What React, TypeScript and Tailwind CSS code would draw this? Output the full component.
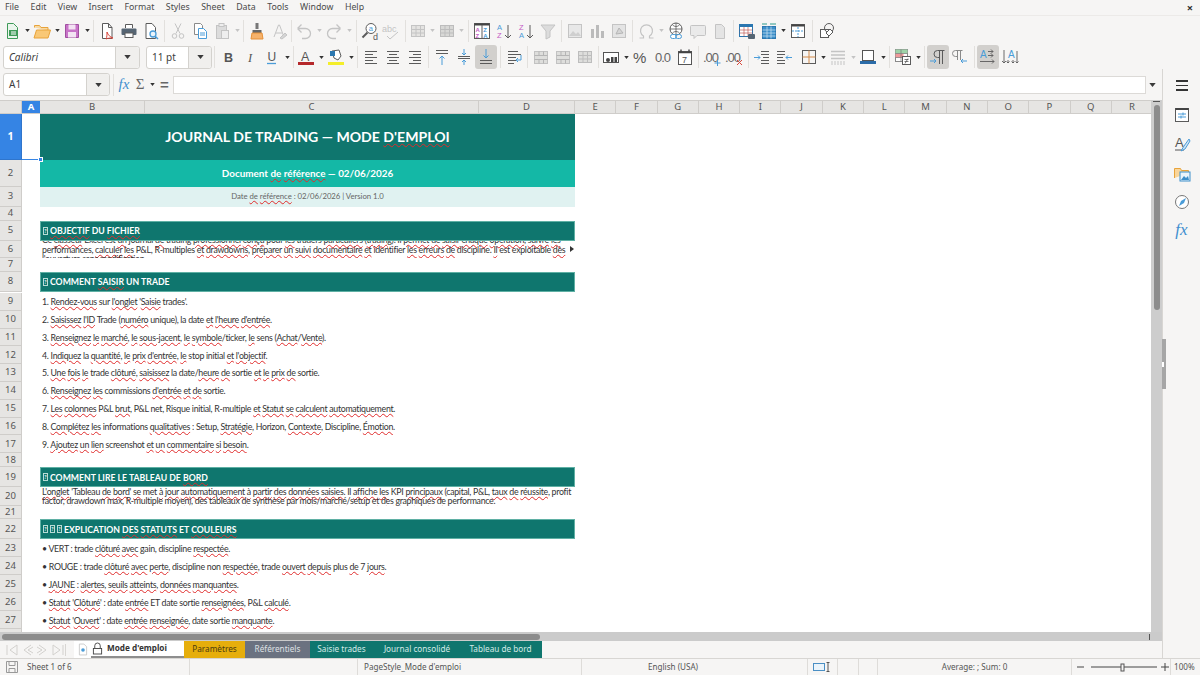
import type { ReactNode } from 'react';

const UI = "font-['Noto_Sans','Open_Sans',sans-serif]";
const CELL = "font-['Lato','Noto_Sans',sans-serif]";
const G = '#5b5b5b';
const D = '#c4c4c4';
const BL = '#4a9cd8';

function Ic({ children }: { children: ReactNode }) {
  return (
    <svg viewBox="0 0 22 22" className="h-[22px] w-[22px] shrink-0" fill="none" strokeWidth="1">
      {children}
    </svg>
  );
}

function Btn({ children, active }: { children?: ReactNode; active?: boolean }) {
  return (
    <div className={active ? 'h-[24px] w-[22px] shrink-0 flex items-center justify-center rounded-[3px] bg-[#d2d0cd]' : 'h-[24px] w-[22px] shrink-0 flex items-center justify-center'}>
      <Ic>{children}</Ic>
    </div>
  );
}

function Arr({ off, narrow }: { off?: boolean; narrow?: boolean }) {
  return (
    <div className={narrow ? 'w-[7px] shrink-0 flex justify-center' : 'w-[8px] shrink-0 flex justify-center'}>
      <svg viewBox="0 0 6 4" className="h-[3px] w-[5px] shrink-0">
        <path d="M0 0h6L3 4z" fill={off ? '#c4c4c4' : '#333'} />
      </svg>
    </div>
  );
}

function Sep({ w }: { w: string }) {
  return (
    <div className={`${w} shrink-0 flex justify-center`}>
      <div className="h-[22px] w-px bg-[#e2e0dd]" />
    </div>
  );
}

const Lines = ({ ys, x1 = 5, x2 = 17, c = G, short = false, right = false }: { ys: number[]; x1?: number; x2?: number; c?: string; short?: boolean; right?: boolean }) => (
  <>
    {ys.map((y, i) => (
      <path key={y} d={`M${right && short && i % 2 ? x1 + 4 : x1} ${y + 0.5}H${!right && short && i % 2 ? x2 - 4 : x2}`} stroke={c} />
    ))}
  </>
);

const TableIc = ({ c = D, fill = '#e4e3e1' }: { c?: string; fill?: string }) => (
  <>
    <rect x="4.5" y="5.5" width="13" height="11" fill={fill} stroke={c} />
    <path d="M4.5 9.5h13M4.5 13h13M9 5.5v11M13.5 5.5v11" stroke={c} />
  </>
);

const MergeIc = () => (
  <>
    <rect x="4.5" y="5.5" width="13" height="12" fill="#dededc" stroke="#c2c2c2" />
    <path d="M4.5 9.5h13M4.5 13.5h13M9 5.5v4M13.5 5.5v4M9 13.5v4M13.5 13.5v4" stroke="#b5b5b5" />
  </>
);

function Toolbar1() {
  return (
    <div className="flex h-[29px] items-center pl-[1px]">
      <Btn><path d="M6.5 3.5h6l4 4v11h-10z" fill="#eaf5ec" stroke="#3f9a58" /><rect x="8" y="10" width="9" height="6" fill="#3f9a58" /><path d="M10 12h5M10 14h5" stroke="#fff" /></Btn>
      <Arr />
      <Btn><path d="M3.5 7.5v-2h5l1.5 2h7v3" fill="#f7d9a2" stroke="#e8a33a" /><path d="M3 18h14l2.5-8H5.5z" fill="#f9c876" stroke="#e8a33a" /></Btn>
      <Arr />
      <Btn><path d="M4.5 4.5h13v13h-13z" fill="#c873c8" stroke="#a04fa0" /><rect x="7.5" y="4.5" width="7" height="5" fill="#f3e3f3" /><rect x="7" y="12" width="8" height="5.5" fill="#f3e3f3" /></Btn>
      <Arr />
      <Sep w="w-[5px]" />
      <Btn><path d="M6.5 3.5h6l3.5 4v11h-9.5z" fill="#fff" stroke={G} /><path d="M12.5 3.5v4h3.5" stroke={G} /><path d="M11 12c1 3 3 5 6 6-3 0-5 0-7 1 1-2 1-4 1-7z" stroke="#d8453a" fill="none" /></Btn>
      <Btn><path d="M7.5 8V4.5h7V8" stroke={G} fill="#fff" /><rect x="3.5" y="8.5" width="15" height="6.5" rx="1" fill="#566573" /><rect x="7" y="13" width="8" height="4.5" fill="#fff" stroke={G} /></Btn>
      <Btn><path d="M6 3.5h6l3.5 4v11H6z" fill="#fff" stroke={G} /><circle cx="13" cy="14" r="3" fill="#eaf4fb" stroke={BL} strokeWidth="1.3" /><path d="M15 16l3 3" stroke={BL} strokeWidth="1.5" /></Btn>
      <Sep w="w-[5px]" />
      <Btn><path d="M8 3.5l5 10M14 3.5l-5 10" stroke={D} /><circle cx="7.5" cy="16" r="2.3" stroke={D} /><circle cx="14.5" cy="16" r="2.3" stroke={D} /></Btn>
      <Btn><path d="M5.5 3.5h6l2 2v9h-8z" fill="#fff" stroke="#8a8a8a" /><path d="M9.5 8.5h5l3 3v7h-8z" fill="#fff" stroke={BL} /><path d="M11 13h5M11 15h5" stroke={BL} /></Btn>
      <Btn><rect x="5.5" y="5.5" width="10" height="13" fill="#dcdcdc" stroke={D} /><rect x="8" y="3.5" width="5" height="3" fill="#eee" stroke={D} /><rect x="10.5" y="10.5" width="7" height="8" fill="#eee" stroke={D} /></Btn>
      <Arr off />
      <Sep w="w-[5px]" />
      <Btn><rect x="9.5" y="3" width="3" height="6" fill="#777" /><path d="M6.5 10h9v3h-9z" fill="#666" /><path d="M6 13h10l1 6H5z" fill="#f6b26b" stroke="#e69138" /></Btn>
      <Btn><path d="M6 17L10.5 5h1L16 17M8 13h6" stroke={D} /><path d="M12 18l5-5 2 2-5 4z" fill="#d5d5d5" stroke={D} /></Btn>
      <div className="w-[3px] shrink-0 flex justify-center"><div className="h-[22px] w-px bg-[#e2e0dd]" /></div>
      <Btn><path d="M4.5 8.5h8a5 5 0 010 10H9M4.5 8.5l4-4M4.5 8.5l4 4" stroke={D} strokeWidth="1.3" /></Btn>
      <Arr off />
      <Btn><path d="M17.5 8.5h-8a5 5 0 000 10H13M17.5 8.5l-4-4M17.5 8.5l-4 4" stroke={D} strokeWidth="1.3" /></Btn>
      <Arr off />
      <Sep w="w-[6px]" />
      <Btn><circle cx="12" cy="8.5" r="5" fill="#fff" stroke={G} /><path d="M8.5 12.5l-5 5" stroke={G} strokeWidth="2" /><text x="9.7" y="11" fontSize="7.5" fill={BL} fontFamily="Liberation Sans">a</text><text x="14" y="20" fontSize="9" fill={G} fontFamily="Liberation Sans">d</text></Btn>
      <Btn><text x="1" y="12" fontSize="9" fill={D} fontFamily="Liberation Sans">abc</text><path d="M6 16l3 3 8-7" stroke={D} /></Btn>
      <div className="w-[4px] shrink-0 flex justify-center"><div className="h-[22px] w-px bg-[#e2e0dd]" /></div>
      <Btn><TableIc /></Btn>
      <Arr off narrow />
      <Btn><TableIc c="#bdbdbd" fill="#d8d8d6" /></Btn>
      <Arr off narrow />
      <Sep w="w-[6px]" />
      <Btn><rect x="3.5" y="3.5" width="15" height="15" fill="#fff" stroke={G} /><path d="M3.5 4.5h15" stroke="#444" strokeWidth="2" /><path d="M11 5v13" stroke={G} /><text x="4.5" y="11.5" fontSize="6" fill="#c45ac4" fontFamily="Liberation Sans" fontWeight="700">A</text><text x="4.5" y="17.5" fontSize="6" fill="#c45ac4" fontFamily="Liberation Sans" fontWeight="700">Z</text><text x="12.3" y="11.5" fontSize="6" fill={BL} fontFamily="Liberation Sans" fontWeight="700">Z</text><text x="12.3" y="17.5" fontSize="6" fill={BL} fontFamily="Liberation Sans" fontWeight="700">A</text></Btn>
      <Btn><text x="4" y="10" fontSize="7.5" fill={BL} fontFamily="Liberation Sans">A</text><text x="4" y="18" fontSize="7.5" fill="#c45ac4" fontFamily="Liberation Sans">Z</text><path d="M15 5v13M12 15l3 3 3-3" stroke={G} /></Btn>
      <Btn><text x="4" y="10" fontSize="7.5" fill="#c45ac4" fontFamily="Liberation Sans">Z</text><text x="4" y="18" fontSize="7.5" fill={BL} fontFamily="Liberation Sans">A</text><path d="M15 5v13M12 15l3 3 3-3" stroke={G} /></Btn>
      <Btn><path d="M4 5h14l-5 6v6l-4 2v-8z" fill="#dcdcdc" stroke={D} /></Btn>
      <Sep w="w-[5px]" />
      <Btn><rect x="4.5" y="4.5" width="13" height="13" fill="#e8e8e8" stroke={D} /><path d="M5 16l4-5 3 3 2-2 3 4z" fill="#cfcfcf" /></Btn>
      <Btn><rect x="5" y="9" width="3" height="9" fill="#bbb" /><rect x="10" y="5" width="3" height="13" fill="#bbb" /><rect x="15" y="11" width="3" height="7" fill="#bbb" /></Btn>
      <Btn><rect x="4.5" y="4.5" width="13" height="13" fill="#e4e4e4" stroke={D} /><path d="M8 14l3-6 4 5z" stroke="#b5b5b5" fill="#d5d5d5" /></Btn>
      <Sep w="w-[5px]" />
      <Btn><path d="M4.5 18h4v-2a6 6 0 116 0v2h4" stroke={D} strokeWidth="1.2" /></Btn>
      <Arr off />
      <Btn><circle cx="11" cy="9" r="6" fill="#fff" stroke={G} /><path d="M5 9h12M11 3v12M7.5 5c2 2 5 2 7 0M7.5 13c2-2 5-2 7 0" stroke={G} strokeWidth="0.8" /><rect x="5.5" y="14.5" width="6" height="4" rx="2" fill="#fff" stroke={BL} /><rect x="10.5" y="14.5" width="6" height="4" rx="2" stroke={BL} /></Btn>
      <Btn><path d="M4.5 5.5h13a1 1 0 011 1v8a1 1 0 01-1 1H10l-3 3v-3H4.5a1 1 0 01-1-1v-8a1 1 0 011-1z" fill="#eaeaea" stroke={D} /></Btn>
      <Btn><path d="M6.5 4.5h6l3 3v11h-9z" fill="#e4e4e4" stroke={D} /></Btn>
      <Sep w="w-[5px]" />
      <Btn><rect x="3.5" y="4.5" width="13" height="12" fill="#fff" stroke="#2b77b0" /><path d="M3.5 10h13M3.5 13h13M8 7v9.5M12 7v9.5" stroke="#b8473f" strokeWidth="0.6" /><rect x="3.5" y="4.5" width="13" height="2.5" fill="#2b77b0" /><rect x="12" y="14" width="7" height="5" rx="1" fill="#566573" /></Btn>
      <Btn><rect x="4.5" y="6.5" width="13" height="12" fill="#3d8fc9" stroke="#2b77b0" /><path d="M4.5 10h13M4.5 13h13M4.5 16h13M9 6.5v12M13 6.5v12" stroke="#cde4f4" strokeWidth="0.7" /><path d="M4 4h5M12 4h6" stroke="#2e9c8e" /></Btn>
      <Arr narrow />
      <Btn><rect x="4.5" y="4.5" width="13" height="13" fill="#fff" stroke={G} /><path d="M4.5 5.5h13" stroke="#444" strokeWidth="2" /><path d="M5 11h12M11 7v10" stroke={BL} strokeDasharray="2 1" /></Btn>
      <Sep w="w-[7px]" />
      <Btn><rect x="4.5" y="9.5" width="8" height="8" fill="#fff" stroke={G} /><circle cx="13" cy="8" r="4.5" stroke={G} /><path d="M10 13l4-4 3 3-4 4z" fill="#fff" stroke={G} /></Btn>
    </div>
  );
}

function Box({ w, text, italic, arrowW }: { w: string; text: string; italic?: boolean; arrowW: string }) {
  return (
    <div className={`${w} flex h-[23px] shrink-0 rounded-[3px] border border-[#d4d2ce] bg-white`}>
      <div className={`flex-1 truncate pl-[5px] text-[10px] leading-[21px] text-[#3d3d3d] ${italic ? 'italic' : ''}`}>{text}</div>
      <div className={`${arrowW} flex items-center justify-center rounded-r-[3px] border-l border-[#d4d2ce] bg-[#f0efed]`}>
        <svg viewBox="0 0 8 5" className="h-[4px] w-[7px]"><path d="M0 0h8L4 5z" fill="#3a3a3a" /></svg>
      </div>
    </div>
  );
}

function Toolbar2() {
  return (
    <div className="flex h-[24px] items-center pl-[3px]">
      <Box w="w-[137px]" text="Calibri" italic arrowW="w-[24px]" />
      <div className="w-[6px] shrink-0" />
      <Box w="w-[66px]" text="11 pt" arrowW="w-[23px]" />
      <Sep w="w-[5px]" />
      <Btn><text x="7" y="16" fontSize="12.5" fontWeight="700" fill="#555" fontFamily="Liberation Sans">B</text></Btn>
      <div className="w-px shrink-0" />
      <Btn><text x="8" y="16" fontSize="12.5" fontStyle="italic" fill="#555" fontFamily="Liberation Serif">I</text></Btn>
      <div className="-ml-px" />
      <Btn><text x="6.5" y="15" fontSize="12" fill="#555" fontFamily="Liberation Sans">U</text><path d="M6 17.5h9" stroke={BL} strokeWidth="1.3" /></Btn>
      <Arr />
      <div className="w-[4px] shrink-0 flex justify-center"><div className="h-[22px] w-px bg-[#e2e0dd]" /></div>
      <Btn><text x="6" y="14.5" fontSize="12.5" fill="#555" fontFamily="Liberation Sans">A</text><rect x="3" y="16" width="16" height="3" fill="#b5282b" /></Btn>
      <Arr />
      <Btn><path d="M7 5l7-1 2 6-3 4-4-2z" fill="#fff" stroke={G} /><rect x="5" y="5" width="5" height="5" fill="#2b77b0" /><rect x="3" y="16" width="16" height="3" fill="#f4ee2a" /></Btn>
      <Arr />
      <Sep w="w-[5px]" />
      <Btn><Lines ys={[5, 8, 11, 14, 17]} short /></Btn>
      <Btn><path d="M5 5.5h12M7 8.5h8M5 11.5h12M7 14.5h8M5 17.5h12" stroke={G} /></Btn>
      <Btn><Lines ys={[5, 8, 11, 14, 17]} short right /></Btn>
      <Sep w="w-[5px]" />
      <Btn><path d="M5 4.5h12M5 7.5h12" stroke={G} /><path d="M11 19v-9M8.5 12.5L11 10l2.5 2.5" stroke={BL} /></Btn>
      <Btn><path d="M5 10.5h12M5 12.5h12" stroke={G} /><path d="M11 3v6M9 7l2 2 2-2M11 19v-5M9 16l2-2 2 2" stroke={BL} /></Btn>
      <Btn active><path d="M5 14.5h12M5 17.5h12" stroke={G} /><path d="M11 3v9M8.5 9.5L11 12l2.5-2.5" stroke={BL} /></Btn>
      <Sep w="w-[6px]" />
      <Btn><path d="M5 5.5h10M5 8.5h13M5 11.5h8M5 14.5h8M5 17.5h6" stroke={G} /><path d="M18 9v5h-5M15 12l-2 2 2 2" stroke={BL} /></Btn>
      <Sep w="w-[5px]" />
      <Btn><MergeIc /></Btn>
      <Btn><MergeIc /></Btn>
      <Btn><TableIc c="#bdbdbd" fill="#dededc" /></Btn>
      <div className="w-[4px] shrink-0 flex justify-center"><div className="h-[22px] w-px bg-[#e2e0dd]" /></div>
      <Btn><rect x="3.5" y="6.5" width="15" height="10" fill="#fff" stroke="#555" /><circle cx="8" cy="14" r="2" fill="#444" /><rect x="11" y="11" width="2.5" height="5" fill="#444" /><rect x="14.5" y="11" width="2.5" height="5" fill="#444" /></Btn>
      <Arr />
      <Btn><text x="3" y="16.5" fontSize="15" fill="#555" fontFamily="Liberation Sans" textLength="16">%</text></Btn>
      <Btn><text x="3" y="16" fontSize="13" fill="#666" fontFamily="Liberation Sans" textLength="16">0.0</text></Btn>
      <Btn><rect x="4.5" y="5.5" width="13" height="13" fill="#fff" stroke="#555" /><path d="M4.5 6.5h13M7 3.5v3M15 3.5v3" stroke="#444" strokeWidth="1.4" /><text x="8" y="16.5" fontSize="9" fill="#555" fontFamily="Liberation Sans">7</text></Btn>
      <Sep w="w-[5px]" />
      <Btn><text x="2" y="15.5" fontSize="13" fill="#666" fontFamily="Liberation Sans" textLength="16">.00</text><path d="M16.5 14v6M13.5 17h6" stroke={BL} /></Btn>
      <Btn><text x="2" y="15.5" fontSize="13" fill="#666" fontFamily="Liberation Sans" textLength="16">.00</text><path d="M14 14l5 5M19 14l-5 5" stroke="#d8453a" /></Btn>
      <Sep w="w-[6px]" />
      <Btn><path d="M10 5.5h8M10 8.5h8M12 11.5h6M10 14.5h8M10 17.5h8" stroke={G} /><path d="M3 11.5h6M7 9.5l2 2-2 2" stroke={BL} /></Btn>
      <Btn><path d="M4 5.5h8M4 8.5h8M4 11.5h6M4 14.5h8M4 17.5h8" stroke={G} /><path d="M19 11.5h-6M15 9.5l-2 2 2 2" stroke={BL} /></Btn>
      <div className="w-[3px] shrink-0" />
      <Btn><rect x="4.5" y="4.5" width="13" height="13" stroke={G} /><path d="M11 4.5v13M4.5 11h13" stroke="#d38b4a" /></Btn>
      <Arr narrow />
      <Btn><path d="M4 5.5h14M4 9h14M4 12.5h14" stroke={D} strokeWidth="1.4" /><path d="M4 16h14M4 18h14" stroke={D} strokeDasharray="2 1" /></Btn>
      <Arr off />
      <Btn><rect x="5.5" y="4.5" width="11" height="10" fill="#fff" stroke="#555" /><rect x="3" y="15" width="16" height="3" fill="#2b6ca8" /></Btn>
      <Arr />
      <Sep w="w-[5px]" />
      <Btn><rect x="3.5" y="3.5" width="12" height="12" fill="#fff" stroke="#8a8a8a" /><path d="M3.5 3.5h12v4h-12z" fill="#9ed3a8" /><path d="M3.5 7.5h8v4h-8z" fill="#ef9a9a" /><path d="M3.5 7.5h12M3.5 11.5h12M9 3.5v12" stroke="#777" strokeWidth="0.7" /><rect x="10.5" y="10.5" width="8" height="8" fill="#fff" stroke={G} /><path d="M12.5 13.5h4M12.5 15.5h4M16 12.5l-3 5" stroke={G} strokeWidth="0.8" /></Btn>
      <Arr />
      <Sep w="w-[5px]" />
      <Btn active><path d="M12.5 5v13M15.5 5v13M17.5 4.5h-7a3.5 3.5 0 000 7h2" stroke={G} /><path d="M3 15h6M7 13l2 2-2 2" stroke={BL} /></Btn>
      <Btn><path d="M8.5 5v9M11.5 5v9M13.5 4.5h-7a3 3 0 000 6h2" stroke="#8a8a8a" /><path d="M18 15h-6M14 13l-2 2 2 2" stroke={BL} /></Btn>
      <Sep w="w-[6px]" />
      <Btn active><text x="3" y="11.5" fontSize="10" fill={BL} fontFamily="Liberation Sans">A</text><path d="M11 5.5h5M14 3.5l2 2-2 2M11 9.5h5M14 7.5l2 2-2 2M3 15.5h14M15 13.5l2 2-2 2" stroke={G} strokeWidth="0.9" /></Btn>
      <Btn><text x="9" y="12" fontSize="10" fill={BL} fontFamily="Liberation Sans">A</text><path d="M5 4v13M3 15l2 2 2-2M9 14v3M7.5 15.5L9 17l1.5-1.5M14 14v3M12.5 15.5L14 17l1.5-1.5M18 5v12M16.5 15.5L18 17l1.5-1.5" stroke={G} strokeWidth="0.9" /></Btn>
    </div>
  );
}

function FormulaBar() {
  return (
    <div className="flex h-[31px] items-center pl-[3px] pr-[4px]">
      <Box w="w-[107px]" text="A1" arrowW="w-[23px]" />
      <Sep w="w-[6px]" />
      <div className="w-[16px] shrink-0 text-center font-['Liberation_Serif',serif] text-[15px] italic leading-none text-[#3f8fcf]">fx</div>
      <div className="w-[16px] shrink-0 text-center font-['Liberation_Serif',serif] text-[15px] leading-none text-[#666]">Σ</div>
      <Arr />
      <div className="w-[2px] shrink-0" />
      <div className="w-[13px] shrink-0 text-center font-['Liberation_Sans',sans-serif] text-[15px] font-bold leading-none text-[#666]">=</div>
      <div className="w-[2px] shrink-0" />
      <div className="h-[18px] min-w-0 flex-1 border border-[#dcdad7] bg-white" />
      <div className="flex w-[12px] shrink-0 justify-center">
        <svg viewBox="0 0 8 5" className="h-[4px] w-[7px]"><path d="M0 0h8L4 5z" fill="#3a3a3a" /></svg>
      </div>
    </div>
  );
}

function Spell({ t }: { t: string }) {
  return (
    <>
      {t.split('~').map((s, i) =>
        i % 2 ? (
          <span key={i} className="underline decoration-[#e02b2b] decoration-wavy decoration-[0.5px] underline-offset-[1px]">{s}</span>
        ) : (
          <span key={i}>{s}</span>
        ),
      )}
    </>
  );
}

function RowHead({ n, active }: { n: number; active?: boolean }) {
  return (
    <div className={active
      ? `flex w-[22px] shrink-0 items-center justify-center border-b border-r border-[#2f75cc] bg-[#3584e4] text-[10.5px] font-bold text-white ${UI}`
      : `flex w-[22px] shrink-0 items-center justify-center border-b border-r border-[#cfcdca] bg-[#e6e5e3] text-[9.5px] text-[#555] ${UI}`}>{n}</div>
  );
}

function Row({ n, h, children, active }: { n: number; h: string; children?: ReactNode; active?: boolean }) {
  return (
    <div className={`${h} flex shrink-0`}>
      <RowHead n={n} active={active} />
      <div className="w-[18px] shrink-0" />
      <div className="w-[535px] shrink-0 overflow-hidden">{children}</div>
    </div>
  );
}

function Section({ n, t, boxes = 1 }: { n: number; t: string; boxes?: number }) {
  return (
    <Row n={n} h="h-[20px]">
      <div className={`flex h-full items-center border border-[#5fb0a4] bg-[#0f766e] pl-[2px] text-[8.7px] font-bold text-white ${CELL}`}>
        {Array.from({ length: boxes }, (_, i) => (
          <span key={i} className="mr-[2px] flex h-[8px] w-[5px] items-center justify-center border border-[#b9dcd7] text-[5px] leading-none">?</span>
        ))}
        <span className="whitespace-nowrap"><Spell t={t} /></span>
      </div>
    </Row>
  );
}

function Item({ n, t, h }: { n: number; t: string; h: string }) {
  return (
    <Row n={n} h={h}>
      <div className={`flex h-full items-center whitespace-nowrap pl-[2px] text-[8.8px] tracking-[-0.3px] text-[#333] ${CELL}`}>
        <span><Spell t={t} /></span>
      </div>
    </Row>
  );
}

const steps = [
  "1. ~Rendez-vous~ sur ~l'onglet~ '~Saisie~ trades'.",
  "2. ~Saisissez~ ~l'ID~ Trade (~numéro~ unique), la date ~et~ ~l'heure~ ~d'entrée~.",
  '3. ~Renseignez~ ~le~ ~marché~, ~le~ ~sous-jacent~, ~le~ ~symbole~/ticker, ~le~ sens (~Achat~/~Vente~).',
  "4. ~Indiquez~ la ~quantité~, ~le~ ~prix~ ~d'entrée~, ~le~ stop initial ~et~ ~l'objectif~.",
  '5. ~Une~ ~fois~ ~le~ trade ~clôturé~, ~saisissez~ la date/~heure~ ~de~ sortie ~et~ ~le~ ~prix~ ~de~ sortie.',
  "6. ~Renseignez~ ~les~ commissions ~d'entrée~ ~et~ ~de~ sortie.",
  '7. ~Les~ ~colonnes~ P&L ~brut~, P&L net, Risque initial, R-multiple ~et~ ~Statut~ ~se~ ~calculent~ ~automatiquement~.',
  '8. ~Complétez~ ~les~ informations ~qualitatives~ : Setup, ~Stratégie~, Horizon, ~Contexte~, Discipline, ~Émotion~.',
  '9. ~Ajoutez~ ~un~ ~lien~ screenshot ~et~ ~un~ ~commentaire~ ~si~ ~besoin~.',
];

const statuts = [
  '• VERT : trade ~clôturé~ ~avec~ gain, discipline ~respectée~.',
  '• ROUGE : trade ~clôturé~ ~avec~ ~perte~, discipline non ~respectée~, trade ~ouvert~ ~depuis~ plus ~de~ 7 ~jours~.',
  '• ~JAUNE~ : ~alertes~, ~seuils~ ~atteints~, ~données~ ~manquantes~.',
  "• ~Statut~ '~Clôturé~' : date ~entrée~ ET date sortie ~renseignées~, P&L ~calculé~.",
  "• ~Statut~ '~Ouvert~' : date ~entrée~ ~renseignée~, date sortie ~manquante~.",
];

const cols = ['E', 'F', 'G', 'H', 'I', 'J', 'K', 'L', 'M', 'N', 'O', 'P', 'Q', 'R'];

function ColHeads() {
  const c = 'flex shrink-0 items-center justify-center border-r border-[#cfcdca] text-[9.5px] text-[#555]';
  return (
    <div className={`flex h-[14px] shrink-0 border-b border-t border-[#cfcdca] bg-[#e6e5e3] ${UI}`}>
      <div className="w-[22px] shrink-0 border-r border-[#cfcdca]" />
      <div className="flex w-[18px] shrink-0 items-center justify-center bg-[#3584e4] text-[9.5px] font-bold text-white">A</div>
      <div className={`${c} w-[105px]`}>B</div>
      <div className={`${c} w-[334px]`}>C</div>
      <div className={`${c} w-[96px]`}>D</div>
      {cols.map((l) => (
        <div key={l} className={`${c} w-[41.3px]`}>{l}</div>
      ))}
    </div>
  );
}

function Sheet() {
  return (
    <div className="relative min-w-0 flex-1 overflow-hidden bg-white">
      <ColHeads />
      <Row n={1} h="h-[46px]" active>
        <div className={`flex h-full items-center justify-center whitespace-nowrap bg-[#0f766e] text-[14.1px] font-bold text-white ${CELL}`}>
          <span><Spell t="JOURNAL DE TRADING — MODE ~D'EMPLOI~" /></span>
        </div>
      </Row>
      <Row n={2} h="h-[27px]">
        <div className={`flex h-full items-center justify-center whitespace-nowrap bg-[#14b8a6] text-[9.9px] font-bold text-white ${CELL}`}>
          <span>Document <Spell t="~de~ ~référence~" /> — 02/06/2026</span>
        </div>
      </Row>
      <Row n={3} h="h-[20px]">
        <div className={`flex h-full items-center justify-center whitespace-nowrap bg-[#e0f2f1] text-[7.8px] tracking-[-0.05px] text-[#666] ${CELL}`}>
          <span>Date <Spell t="~de~ ~référence~" /> : 02/06/2026 | Version 1.0</span>
        </div>
      </Row>
      <Row n={4} h="h-[14px]" />
      <Section n={5} t="~OBJECTIF~ DU ~FICHIER~" />
      <Row n={6} h="h-[17px]">
        <div className="relative h-full overflow-hidden">
          <div className={`-mt-[6px] pl-[2px] text-[8.8px] leading-[9.5px] tracking-[-0.3px] text-[#333] whitespace-nowrap ${CELL}`}>
            <div><Spell t="Ce ~classeur~ Excel est ~un~ journal ~de~ trading ~professionnel~ ~conçu~ pour ~les~ traders ~particuliers~ (~trading~). Il ~permet~ ~de~ ~saisir~ ~chaque~ ~opération~, ~suivre~ ~les~" /></div>
            <div><Spell t="performances, ~calculer~ ~les~ P&L, R-multiples ~et~ ~drawdowns~, ~préparer~ ~un~ ~suivi~ ~documentaire~ ~et~ identifier ~les~ ~erreurs~ ~de~ discipline. ~Il~ est exploitable ~dès~" /></div>
            <div><Spell t="~l'ouverture~ sans modification." /></div>
          </div>
          <svg viewBox="0 0 4 6" className="absolute right-[1px] top-[5px] h-[6px] w-[4px]"><path d="M0 0l4 3-4 3z" fill="#333" /></svg>
        </div>
      </Row>
      <Row n={7} h="h-[14px]" />
      <Section n={8} t="COMMENT ~SAISIR~ UN TRADE" />
      <div className="h-px" />
      {steps.map((t, i) => <Item key={t} n={9 + i} t={t} h="h-[17.8px]" />)}
      <Row n={18} h="h-[14px]" />
      <Section n={19} t="COMMENT LIRE LE TABLEAU DE ~BORD~" />
      <Row n={20} h="h-[19px]">
        <div className={`flex h-full flex-col justify-center whitespace-nowrap pb-[1px] pl-[2px] text-[8.8px] leading-[9.5px] tracking-[-0.3px] text-[#333] ${CELL}`}>
          <div><Spell t="~L'onglet~ 'Tableau ~de~ ~bord~' ~se~ met ~à~ ~jour~ ~automatiquement~ ~à~ ~partir~ ~des~ ~données~ ~saisies~. Il ~affiche~ ~les~ KPI ~principaux~ (capital, P&L, ~taux~ ~de~ ~réussite~, profit" /></div>
          <div><Spell t="factor, ~drawdown~ max, R-multiple ~moyen~), ~des~ tableaux ~de~ ~synthèse~ par ~mois~/~marché~/setup ~et~ ~des~ ~graphiques~ ~de~ performance." /></div>
        </div>
      </Row>
      <Row n={21} h="h-[13px]" />
      <Section n={22} t="EXPLICATION ~DES~ ~STATUTS~ ET ~COULEURS~" boxes={3} />
      {statuts.map((t, i) => <Item key={t} n={23 + i} t={t} h="h-[18px]" />)}
      <Row n={28} h="h-[18px]" />
      {/* curseur de la cellule A1 */}
      <div className="absolute left-[22px] top-[59px] h-[1px] w-[18px] bg-[#3584e4]" />
      <div className="absolute left-[38px] top-[57px] h-[5px] w-[5px] border border-white bg-[#3584e4]" />
    </div>
  );
}

function VScroll() {
  return (
    <div className="flex w-[11px] shrink-0 flex-col bg-[#cdcdcd]">
      <div className="mx-auto mt-[1px] h-[1px] w-[7px] bg-[#555]" />
      <div className="mx-auto mt-[3px] h-[205px] w-[6px] rounded-[3px] bg-[#8c8c8c]" />
    </div>
  );
}

function HScroll() {
  return (
    <div className="flex h-[9px] shrink-0 items-center bg-[#cbcbcb] pl-[2px]">
      <div className="h-[6px] w-[538px] rounded-[3px] bg-[#8c8c8c]" />
      <div className="ml-auto mr-[12px] h-[6px] w-px bg-[#555]" />
    </div>
  );
}

function Tabs() {
  const nav = 'h-[12px] w-[15px] shrink-0';
  return (
    <div className={`flex h-[17px] shrink-0 items-center text-[8.2px] ${UI}`}>
      <div className="flex w-[66px] shrink-0 items-center border-r border-[#d8d6d3] pl-[5px]">
        <svg viewBox="0 0 15 12" className={nav}><path d="M2 1v10M12 1L5 6l7 5z" stroke="#d3d1ce" fill="none" /></svg>
        <svg viewBox="0 0 15 12" className={nav}><path d="M11 1L4 6l7 5M13 3L8 6l5 3" stroke="#d3d1ce" fill="none" /></svg>
        <svg viewBox="0 0 15 12" className={nav}><path d="M4 1l7 5-7 5M2 3l5 3-5 3" stroke="#d3d1ce" fill="none" /></svg>
        <svg viewBox="0 0 15 12" className={nav}><path d="M13 1v10M3 1l7 5-7 5z" stroke="#d3d1ce" fill="none" /></svg>
      </div>
      <div className="w-[8px] shrink-0" />
      <div className="flex h-full w-[110px] shrink-0 items-stretch bg-white">
        <div className="flex w-[17px] shrink-0 items-center justify-center">
          <svg viewBox="0 0 11 13" className="h-[13px] w-[10px]"><path d="M1.5.5h5l3 3v9h-8z" fill="#fff" stroke="#c9c9c9" /><circle cx="5.5" cy="7" r="2" fill="#4a9cd8" /></svg>
        </div>
        <div className="flex flex-1 items-center border-b-[2px] border-[#8e8e8e] pl-[1px]">
          <svg viewBox="0 0 12 13" className="h-[13px] w-[11px] shrink-0"><path d="M3 6V3.5a3 3 0 016 0V6" fill="none" stroke="#444" /><rect x="1.5" y="6.5" width="9" height="6" fill="#fff" stroke="#444" /></svg>
          <span className="ml-[4px] whitespace-nowrap font-bold text-[#333]">Mode d'emploi</span>
        </div>
      </div>
      <div className="flex h-full w-[61px] shrink-0 items-center justify-center bg-[#e6ae0c] text-[#4a3b10]">Paramètres</div>
      <div className="flex h-full w-[65px] shrink-0 items-center justify-center bg-[#6b7280] text-[#dfe1e4]">Référentiels</div>
      <div className="flex h-full w-[65px] shrink-0 items-center justify-center bg-[#0f766e] pr-[2px] text-[#d4eae7]">Saisie trades</div>
      <div className="flex h-full w-[84px] shrink-0 items-center justify-center bg-[#0f766e] text-[#d4eae7]">Journal consolidé</div>
      <div className="flex h-full w-[83px] shrink-0 items-center justify-center bg-[#0f766e] text-[#d4eae7]">Tableau de bord</div>
    </div>
  );
}

function SidebarDeck() {
  return (
    <div className="relative flex w-[38px] shrink-0 flex-col items-center border-l border-[#d8d6d3]">
      <div className="mt-[11px] flex flex-col gap-[3px]">
        <div className="h-[1.5px] w-[12px] bg-[#333]" />
        <div className="h-[1.5px] w-[12px] bg-[#333]" />
        <div className="h-[1.5px] w-[12px] bg-[#333]" />
      </div>
      <div className="mt-[13px] flex flex-col items-center gap-[7px]">
        <Ic><rect x="4.5" y="4.5" width="13" height="13" fill="#fff" stroke={G} /><path d="M4.5 5h13" stroke="#444" strokeWidth="2" /><path d="M7 10h8M7 13h8M12 8.5v3M10 11.5v3" stroke={BL} /></Ic>
        <Ic><text x="4" y="14" fontSize="13" fill="#555" fontFamily="Liberation Sans">A</text><path d="M4 17h9" stroke="#555" /><path d="M18 6l-5 7-3 5 4-2 5-8z" fill="#cfe4f5" stroke={BL} /></Ic>
        <Ic><path d="M3.5 16V6.5h6l1 2h7V11" fill="#f9d59a" stroke="#e8a33a" /><rect x="9" y="10" width="10" height="9" fill="#eaf4fb" stroke="#3d8fc9" /><path d="M10 18l3-4 2 2 2-2 1 4z" fill="#3d8fc9" /></Ic>
        <Ic><circle cx="11" cy="11" r="6.5" fill="#fff" stroke="#777" /><path d="M15 7l-2 5-5 3 2-5z" fill={BL} /></Ic>
        <div className="-mt-[1px] h-[22px] w-[22px] text-center font-['Liberation_Serif',serif] text-[17px] italic leading-[22px] text-[#3f8fcf]">fx</div>
      </div>
      <div className="absolute -left-[1px] top-[270px] flex h-[50px] w-[4px] items-center bg-[#a6a6a6]">
        <div className="h-[5px] w-[2px] bg-white" />
      </div>
    </div>
  );
}

function StatusBar() {
  const s = 'flex h-full shrink-0 items-center border-l border-[#dedcd9]';
  return (
    <div className={`flex h-[17px] shrink-0 items-center border-t border-[#d8d6d3] text-[8.1px] text-[#555] ${UI}`}>
      <div className="flex h-full w-[189px] shrink-0 items-center pl-[6px]">
        <svg viewBox="0 0 12 12" className="h-[12px] w-[12px] shrink-0"><path d="M.5.5h11v11H.5z" fill="none" stroke="#999" /><path d="M3 .5v4h6v-4M3 11.5V7.5h6v4" fill="none" stroke="#999" /></svg>
        <span className="ml-[9px]">Sheet 1 of 6</span>
      </div>
      <div className={`${s} w-[168px]`} />
      <div className={`${s} w-[224px] pl-[6px]`}>PageStyle_Mode d'emploi</div>
      <div className={`${s} w-[226px] pl-[66px]`}>English (USA)</div>
      <div className={`${s} w-[30px] pl-[5px]`}>
        <svg viewBox="0 0 18 10" className="h-[10px] w-[18px]"><rect x=".5" y="1.5" width="11" height="7" fill="#eaf4fb" stroke="#4a8fc4" /><path d="M15 .5v9M13.5.5h3M13.5 9.5h3" stroke="#555" /></svg>
      </div>
      <div className={`${s} w-[21px]`} />
      <div className={`${s} w-[19px]`} />
      <div className={`${s} w-[194px] justify-center`}>Average: ; Sum: 0</div>
      <div className={`${s} w-[99px] pl-[5px]`}>
        <svg viewBox="0 0 92 10" className="h-[10px] w-[92px]"><path d="M0 5h7M14 5h66M84 5h8M88 1v8" stroke="#444" /><rect x="44" y="2" width="3" height="7" fill="#f6f5f4" stroke="#555" /></svg>
      </div>
      <div className={`${s} pl-[3px]`}>100%</div>
    </div>
  );
}

const menus = ['File', 'Edit', 'View', 'Insert', 'Format', 'Styles', 'Sheet', 'Data', 'Tools', 'Window', 'Help'];

export default function App() {
  return (
    <div className={`flex h-[675px] w-[1200px] flex-col overflow-hidden bg-[#f6f5f4] ${UI}`}>
      <div className="flex h-[16px] shrink-0 items-center border-b border-[#eceae8] pl-[5px] pr-[7px] text-[8.8px] text-[#4a4a4a]">
        <div className="flex gap-[11.5px]">
          {menus.map((m) => <span key={m}>{m}</span>)}
        </div>
        <span className="ml-auto text-[11px] font-bold leading-none text-[#333]">×</span>
      </div>
      <Toolbar1 />
      <Toolbar2 />
      <div className="flex min-h-0 flex-1">
        <div className="flex min-w-0 flex-1 flex-col">
          <FormulaBar />
          <div className="flex min-h-0 flex-1">
            <Sheet />
            <VScroll />
          </div>
          <HScroll />
          <Tabs />
        </div>
        <SidebarDeck />
      </div>
      <StatusBar />
    </div>
  );
}
